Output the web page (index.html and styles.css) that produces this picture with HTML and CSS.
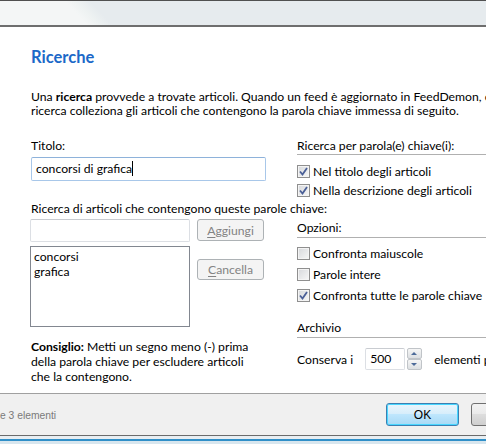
FILE: index.html
```html
<!DOCTYPE html>
<html lang="it">
<head>
  <meta charset="UTF-8" />
  <title>Ricerche</title>
  <link rel="stylesheet" href="styles.css">
</head>
<body>
  <div class="window">
    <div class="titlebar"></div>

    <div class="dialog">
      <h1 class="title">Ricerche</h1>
      <p class="intro">Una <b>ricerca</b> provvede a trovate articoli. Quando un feed è aggiornato in FeedDemon, ciascuna<br>ricerca colleziona gli articoli che contengono la parola chiave immessa di seguito.</p>

      <div class="columns">
        <div class="col-left">
          <div class="field-label">Titolo:</div>
          <div class="textbox title-box">concorsi di grafica<span class="caret"></span></div>

          <div class="field-label keywords-label">Ricerca di articoli che contengono queste parole chiave:</div>
          <div class="keyword-grid">
            <div class="textbox keyword-input"></div>
            <button class="btn btn-disabled"><u>A</u>ggiungi</button>
            <div class="listbox">
              <div>concorsi</div>
              <div>grafica</div>
            </div>
            <button class="btn btn-disabled btn-remove"><u>C</u>ancella</button>
          </div>

          <p class="tip"><b>Consiglio:</b> Metti un segno meno (-) prima<br>della parola chiave per escludere articoli<br>che la contengono.</p>
        </div>

        <div class="col-right">
          <div class="group-head">Ricerca per parola(e) chiave(i):</div>
          <div class="checks first">
            <label class="check"><span class="box checked"></span>Nel titolo degli articoli</label>
            <label class="check"><span class="box checked"></span>Nella descrizione degli articoli</label>
          </div>

          <div class="group-head options-head">Opzioni:</div>
          <div class="checks options">
            <label class="check"><span class="box"></span>Confronta maiuscole</label>
            <label class="check"><span class="box"></span>Parole intere</label>
            <label class="check"><span class="box checked"></span>Confronta tutte le parole chiave</label>
          </div>

          <div class="group-head archive-head">Archivio</div>
          <div class="keep-row">
            <span>Conserva i</span>
            <div class="textbox number-box">500</div>
            <div class="spinner">
              <span class="spin up"></span>
              <span class="spin down"></span>
            </div>
            <span class="keep-after">elementi per feed</span>
          </div>
        </div>
      </div>
    </div>

    <div class="footer">
      <span class="status">e 3 elementi</span>
      <div class="footer-buttons">
        <button class="btn btn-ok">OK</button>
        <button class="btn btn-cancel">Annulla</button>
      </div>
    </div>
    <div class="frame-bottom"></div>
  </div>
</body>
</html>
```

FILE: styles.css
```css
body {
  margin: 0;
  font-family: 'Lato', sans-serif;
  font-size: 12.2px;
  color: #000;
  background: #fff;
  overflow: hidden;
}

.window {
  width: 486px;
  height: 444px;
  display: flex;
  flex-direction: column;
  overflow: hidden;
}

.titlebar {
  height: 24px;
  flex-shrink: 0;
  border-top: 1px solid #505050;
  border-bottom: 2px solid #6e6e6e;
  background: linear-gradient(47deg, #f4f6f6 64px, #eef2f2 72px, #e6ebee 82px);
}

.dialog {
  flex: 1;
  padding-left: 31px;
}

.title {
  margin: 20px 0 0;
  font-size: 16.5px;
  line-height: 20px;
  font-weight: bold;
  color: #1b68c8;
}

.intro {
  margin: 23px 0 0;
  line-height: 14px;
  white-space: nowrap;
}

.columns {
  display: flex;
  gap: 31px;
  padding-top: 20px;
}

.col-left {
  width: 235px;
  flex-shrink: 0;
}

.col-right {
  flex: 1;
  min-width: 0;
}

.field-label {
  line-height: 15px;
  white-space: nowrap;
}

.textbox {
  box-sizing: border-box;
  border: 1px solid #dcdfe4;
  border-top-color: #c9ccd1;
  border-radius: 2px;
  background: #fff;
  line-height: 20px;
  padding: 0 4px;
}

.title-box {
  height: 24px;
  margin-top: 4px;
  line-height: 22px;
  border-color: #a8c7e9;
  border-top-color: #8eb2da;
}

.caret {
  display: inline-block;
  width: 1px;
  height: 15px;
  background: #000;
  vertical-align: -3px;
}

.keywords-label {
  margin-top: 20px;
}

.keyword-grid {
  display: grid;
  grid-template-columns: 160px 67px;
  grid-template-rows: 23px 81px;
  column-gap: 7px;
  row-gap: 4px;
  margin-top: 3px;
  margin-left: -1px;
}

.listbox {
  box-sizing: border-box;
  border: 1px solid #828790;
  padding: 2px 3px;
  line-height: 15px;
}

.btn {
  box-sizing: border-box;
  font-family: 'Lato', sans-serif;
  font-size: 12.2px;
  height: 23px;
  padding: 0;
  border-radius: 3px;
}

.btn-disabled {
  height: 22px;
  border: 1px solid #adb2b5;
  background: #f4f4f4;
  color: #838383;
}

.btn-disabled u {
  text-decoration-thickness: 1px;
  text-underline-offset: 2px;
}

.btn-remove {
  margin-top: 13px;
  height: 21px;
}

.tip {
  margin: 12px 0 0;
  line-height: 15px;
  white-space: nowrap;
}

.group-head {
  line-height: 15px;
  padding-bottom: 1px;
  border-bottom: 1px solid #b0b0b0;
  white-space: nowrap;
}

.checks.first {
  margin-top: 7px;
}

.check {
  display: flex;
  align-items: center;
  gap: 3px;
  height: 19px;
  white-space: nowrap;
}

.options .check {
  height: 21px;
}

.box {
  box-sizing: border-box;
  width: 13px;
  height: 13px;
  flex-shrink: 0;
  border: 1px solid #8f8f8f;
  background: linear-gradient(135deg, #d6d8db, #f7f7f7);
  box-shadow: inset 0 0 0 1px #f4f4f4;
}

.box.checked {
  background-image: url("data:image/svg+xml,%3Csvg xmlns='http://www.w3.org/2000/svg' width='11' height='11'%3E%3Cpath d='M2 5.5 L4.5 8.5 L9 2' fill='none' stroke='%234a5f97' stroke-width='1.8'/%3E%3C/svg%3E"), linear-gradient(135deg, #d6d8db, #f7f7f7);
  background-position: center;
  background-repeat: no-repeat;
}

.options-head {
  margin-top: 20px;
  padding-bottom: 2px;
}

.checks.options {
  margin-top: 5px;
}

.archive-head {
  margin-top: 14px;
  padding-bottom: 2px;
}

.keep-row {
  display: flex;
  align-items: center;
  margin-top: 10px;
  height: 22px;
  white-space: nowrap;
}

.keep-row > * {
  flex-shrink: 0;
}

.number-box {
  width: 40px;
  height: 22px;
  margin-left: 12px;
  padding: 0 4px;
}

.spinner {
  display: flex;
  flex-direction: column;
  margin-left: 2px;
  height: 22px;
}

.spin {
  box-sizing: border-box;
  width: 15px;
  height: 11px;
  border: 1px solid #c0c4c8;
  border-radius: 2px;
  background: linear-gradient(#f6f6f6, #dcdfe2);
  position: relative;
}

.spin::after {
  content: "";
  position: absolute;
  left: 3px;
  border-left: 3.5px solid transparent;
  border-right: 3.5px solid transparent;
}

.spin.up::after {
  top: 3px;
  border-bottom: 3px solid #4d6b99;
}

.spin.down::after {
  top: 3px;
  border-top: 3px solid #4d6b99;
}

.keep-after {
  margin-left: 12px;
}

.footer {
  height: 41px;
  flex-shrink: 0;
  border-top: 1px solid #a0a0a0;
  background: #f0f0f0;
  display: flex;
  align-items: center;
}

.status {
  width: 386px;
  flex-shrink: 0;
  font-family: 'Liberation Sans', sans-serif;
  font-size: 10.3px;
  color: #7a7a7a;
  padding-top: 2px;
}

.footer-buttons {
  display: flex;
  gap: 12px;
  flex-shrink: 0;
}

.btn-ok,
.btn-cancel {
  width: 73px;
  font-family: 'Liberation Sans', sans-serif;
  font-size: 12px;
}

.btn-ok {
  border: 1px solid #3c7fb1;
  background: linear-gradient(#e9f5fc 0%, #d8eefb 45%, #bee6fd 50%, #a7d9f5 100%);
  box-shadow: inset 0 0 0 1px #48d6ff;
}

.btn-cancel {
  border: 1px solid #707070;
  background: linear-gradient(#f2f2f2 0%, #ebebeb 45%, #dddddd 50%, #cfcfcf 100%);
}

.frame-bottom {
  height: 8px;
  flex-shrink: 0;
  border-top: 1px solid #6b6b6b;
  background: linear-gradient(#e8eef2 0, #e8eef2 3px, #2f8fc8 3px, #2f8fc8 5px, #d8e6ee 5px);
}
```
